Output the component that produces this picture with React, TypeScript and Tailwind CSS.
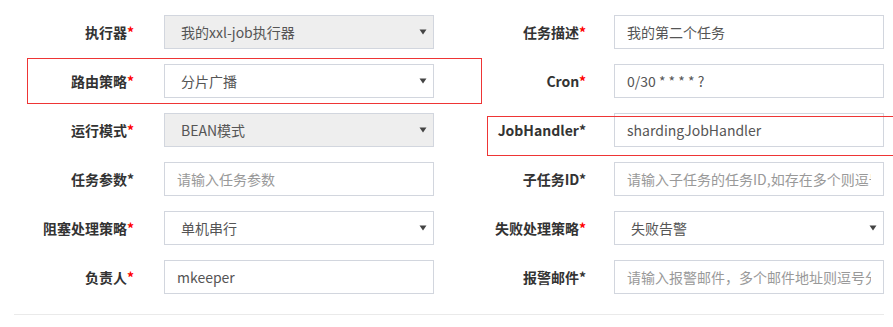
import React from 'react';

type Field = {
    label: string;
    kind: 'select' | 'input';
    value?: string;
    placeholder?: string;
    disabled?: boolean;
    redStar?: boolean;
};

const rows: [Field, Field][] = [
    [
        { label: '执行器', kind: 'select', value: '我的xxl-job执行器', disabled: true, redStar: true },
        { label: '任务描述', kind: 'input', value: '我的第二个任务', redStar: true },
    ],
    [
        { label: '路由策略', kind: 'select', value: '分片广播', redStar: true },
        { label: 'Cron', kind: 'input', value: '0/30 * * * * ?', redStar: true },
    ],
    [
        { label: '运行模式', kind: 'select', value: 'BEAN模式', disabled: true, redStar: true },
        { label: 'JobHandler', kind: 'input', value: 'shardingJobHandler' },
    ],
    [
        { label: '任务参数', kind: 'input', placeholder: '请输入任务参数' },
        { label: '子任务ID', kind: 'input', placeholder: '请输入子任务的任务ID,如存在多个则逗号分隔' },
    ],
    [
        { label: '阻塞处理策略', kind: 'select', value: '单机串行', redStar: true },
        { label: '失败处理策略', kind: 'select', value: '失败告警', redStar: true },
    ],
    [
        { label: '负责人', kind: 'input', value: 'mkeeper', redStar: true },
        { label: '报警邮件', kind: 'input', placeholder: '请输入报警邮件，多个邮件地址则逗号分隔' },
    ],
];

function Caret() {
    return (
        <svg width="8" height="6" viewBox="0 0 8 6" className="shrink-0">
            <path d="M0.5 0.5 L7.5 0.5 L4 5.5 Z" fill="#444" />
        </svg>
    );
}

function FormField({ field, right }: { field: Field; right?: boolean }) {
    return (
        <div className="flex items-center h-[34px] w-[450px] shrink-0">
            <label
                className={`w-[164px] shrink-0 text-right text-[14px] font-bold text-[#333] whitespace-nowrap ${right ? 'pr-[28px]' : 'pr-[30px]'}`}
            >
                {field.label}
                <span className={field.redStar ? 'text-[#ff0000]' : 'text-[#333]'}>*</span>
            </label>
            {field.kind === 'select' ? (
                <div
                    className={`flex items-center justify-between w-[270px] h-[34px] border border-[#d2d6de] pl-[16px] pr-[6px] text-[14px] text-[#555] ${field.disabled ? 'bg-[#eeeeee]' : 'bg-white'}`}
                >
                    <span className="whitespace-nowrap">{field.value}</span>
                    <Caret />
                </div>
            ) : (
                <input
                    readOnly
                    defaultValue={field.value}
                    placeholder={field.placeholder}
                    className="w-[270px] h-[34px] border border-[#d2d6de] bg-white px-[12px] text-[14px] text-[#555] placeholder:text-[#999] outline-none"
                />
            )}
        </div>
    );
}

export default function App() {
    return (
        <div
            className="relative w-[893px] h-[327px] overflow-hidden bg-white"
            style={{ fontFamily: '"Noto Sans CJK SC", "Noto Sans", sans-serif' }}
        >
            <div className="flex flex-col gap-[15px] pt-[15px]">
                {rows.map((pair, i) => (
                    <div key={i} className="flex">
                        <FormField field={pair[0]} />
                        <FormField field={pair[1]} right />
                    </div>
                ))}
            </div>
            <div className="mt-[20px] ml-[14px] w-[870px] border-t border-[#eaeaea]" />

            {/* annotation boxes */}
            <div className="absolute left-[27px] top-[58px] w-[455px] h-[46px] border border-[#ee3535] pointer-events-none" />
            <div className="absolute left-[487px] top-[116px] w-[420px] h-[40px] border border-[#ee3535] pointer-events-none" />
        </div>
    );
}
